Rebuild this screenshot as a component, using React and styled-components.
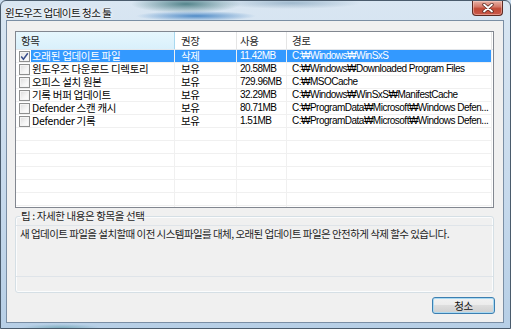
import React from "react";
import styled, { createGlobalStyle } from "styled-components";

const Global = createGlobalStyle`
  html, body { margin: 0; padding: 0; background: #c9dcee; }
  body { font-family: "Noto Sans CJK KR", "Liberation Sans", sans-serif; }
  * { box-sizing: border-box; }
`;

const KFONT = `"Noto Sans CJK KR", "Liberation Sans", sans-serif`;
const LFONT = `"Liberation Sans", "DejaVu Sans", "Noto Sans CJK KR", sans-serif`;

const Window = styled.div`
  width: 511px;
  height: 329px;
  display: flex;
  flex-direction: column;
  border: 1px solid #4a5b6c;
  border-radius: 6px 6px 0 0;
  overflow: hidden;
  background:
    radial-gradient(ellipse 55px 9px at 185px 3px, rgba(40, 100, 105, 0.75), transparent),
    radial-gradient(ellipse 60px 5px at 195px 15px, rgba(35, 110, 185, 0.75), transparent),
    radial-gradient(ellipse 70px 6px at 290px 2px, rgba(90, 130, 160, 0.45), transparent),
    radial-gradient(ellipse 40px 4px at 60px 327px, rgba(70, 140, 150, 0.5), transparent),
    linear-gradient(180deg, #d9e6f2 0%, #c6d9ec 60%, #b7cfe6 100%);
`;

const TitleBar = styled.div`
  height: 19px;
  display: flex;
  align-items: flex-start;
  padding-left: 4px;
`;

const Title = styled.div`
  font-family: ${KFONT};
  font-size: 10.5px;
  letter-spacing: -0.5px;
  line-height: 12px;
  margin-top: 6px;
  color: #111;
  text-shadow: 0 0 5px #fff, 0 0 3px #fff;
  flex: 1;
`;

const CloseButton = styled.div`
  width: 31px;
  height: 15px;
  margin-right: 7px;
  border: 1px solid #5b2a22;
  border-top: none;
  border-radius: 0 0 4px 4px;
  background: linear-gradient(180deg, #e8b2a6 0%, #d47a6a 40%, #c14a36 55%, #c9584a 100%);
  box-shadow: inset 0 0 0 1px rgba(255, 220, 210, 0.45);
  display: flex;
  align-items: center;
  justify-content: center;
`;

const Client = styled.div`
  flex: 1;
  margin: 0 6px 5px 5px;
  border: 1px solid #7a8ea4;
  background: #f0f0f0;
  display: flex;
  flex-direction: column;
  padding: 10px 9px 0 8px;
`;

const ListView = styled.div`
  height: 177px;
  border: 1px solid #828790;
  background: #fff;
  overflow: hidden;
  display: flex;
  flex-direction: column;
`;

const COLS = "159px 62px 50px 205px";

const HeaderRow = styled.div`
  display: grid;
  grid-template-columns: ${COLS};
  height: 18px;
  flex: none;
  border-bottom: 1px solid #e3e6ea;
`;

const HeaderCell = styled.div`
  font-family: ${KFONT};
  font-size: 10.5px;
  letter-spacing: -0.3px;
  line-height: 17px;
  padding-left: ${(p) => p.$pad || 5}px;
  color: #1e1e1e;
  border-right: 1px solid ${(p) => (p.$hot ? "#a8d8ef" : "#e5e5e5")};
  background: ${(p) =>
    p.$hot ? "linear-gradient(180deg, #e6f6fd 0%, #d9f0fb 100%)" : "#fff"};
`;

const Row = styled.div`
  display: grid;
  grid-template-columns: ${COLS};
  height: 13px;
  flex: none;
`;

const Cell = styled.div`
  font-family: ${(p) => (p.$latin ? LFONT : KFONT)};
  font-size: ${(p) => (p.$latin ? "10px" : "10.5px")};
  letter-spacing: ${(p) => (p.$latin ? "-0.5px" : "-0.3px")};
  line-height: 12px;
  height: 13px;
  padding-left: ${(p) => p.$pad || 5}px;
  white-space: nowrap;
  border-right: 1px solid #f0f0f0;
  border-bottom: 1px solid #f0f0f0;
  color: ${(p) => (p.$sel ? "#fff" : "#000")};
  background: ${(p) => (p.$sel ? "#3399ff" : "transparent")};
`;

const FirstCell = styled.div`
  display: flex;
  height: 13px;
  border-right: 1px solid #f0f0f0;
  border-bottom: 1px solid #f0f0f0;
`;

const CheckWrap = styled.div`
  width: 15px;
  flex: none;
  display: flex;
  align-items: center;
  padding-left: 3px;
`;

const Check = styled.div`
  width: 11px;
  height: 11px;
  border: 1px solid #8e8f8f;
  background: linear-gradient(135deg, #dcdcdc 0%, #f6f6f6 60%, #fff 100%);
  box-shadow: inset 0 0 0 1px #f4f4f4;
  display: flex;
  align-items: center;
  justify-content: center;
`;

const Label = styled.div`
  flex: 1;
  font-family: ${KFONT};
  font-size: 10.5px;
  letter-spacing: -0.3px;
  line-height: 12px;
  padding-left: 1px;
  white-space: nowrap;
  color: ${(p) => (p.$sel ? "#fff" : "#000")};
  background: ${(p) => (p.$sel ? "#3399ff" : "transparent")};
`;

const Group = styled.fieldset`
  margin: 2px 0 0 0;
  padding: 3px 0 15px 0;
  border: 1px solid #d5dfe5;
  border-radius: 3px;
  box-shadow: inset 0 0 0 1px #fbfcfd;
`;

const Legend = styled.legend`
  font-family: ${KFONT};
  font-size: 10.5px;
  letter-spacing: -0.4px;
  line-height: 12px;
  padding: 0 1px;
  margin-left: 4px;
  color: #1e1e1e;
`;

const InfoBox = styled.div`
  height: 52px;
  border: 1px solid #dfe4e9;
  border-left: none;
  border-right: none;
  font-family: ${KFONT};
  font-size: 10.5px;
  letter-spacing: -0.55px;
  line-height: 12px;
  padding: 2px 0 0 4px;
  color: #1e1e1e;
`;

const ButtonRow = styled.div`
  display: flex;
  justify-content: flex-end;
  margin-top: 4px;
  margin-right: -1px;
`;

const Button = styled.button`
  width: 63px;
  height: 17px;
  padding: 0;
  border: 1px solid #3c7fb1;
  border-radius: 3px;
  background: linear-gradient(180deg, #f2f2f2 0%, #ebebeb 49%, #dddddd 50%, #cfcfcf 100%);
  box-shadow: inset 0 0 0 1px #a9d9f2;
  font-family: ${KFONT};
  font-size: 10.5px;
  letter-spacing: -0.3px;
  line-height: 14px;
  color: #111;
`;

const rows = [
  { name: "오래된 업데이트 파일", rec: "삭제", size: "11.42MB", path: "C:₩Windows₩WinSxS", checked: true, sel: true },
  { name: "윈도우즈 다운로드 디렉토리", rec: "보유", size: "20.58MB", path: "C:₩Windows₩Downloaded Program Files" },
  { name: "오피스 설치 원본", rec: "보유", size: "729.96MB", path: "C:₩MSOCache" },
  { name: "기록 버퍼 업데이트", rec: "보유", size: "32.29MB", path: "C:₩Windows₩WinSxS₩ManifestCache" },
  { name: "Defender 스캔 캐시", rec: "보유", size: "80.71MB", path: "C:₩ProgramData₩Microsoft₩Windows Defen..." },
  { name: "Defender 기록", rec: "보유", size: "1.51MB", path: "C:₩ProgramData₩Microsoft₩Windows Defen..." },
];

const CheckMark = () => (
  <svg width="9" height="9" viewBox="0 0 9 9">
    <path d="M1.2 4.6 L3.4 7.2 L7.8 1.2" fill="none" stroke="#3a4f8c" strokeWidth="1.5" />
  </svg>
);

const CloseX = () => (
  <svg width="12" height="10" viewBox="0 0 12 10">
    <path d="M2 1.5 L10 8.5 M10 1.5 L2 8.5" stroke="#5b2a22" strokeWidth="3.4" strokeLinecap="round" />
    <path d="M2 1.5 L10 8.5 M10 1.5 L2 8.5" stroke="#fff" strokeWidth="1.8" strokeLinecap="round" />
  </svg>
);

export default function App() {
  const filler = Array.from({ length: 7 });
  return (
    <>
      <Global />
      <Window>
        <TitleBar>
          <Title>윈도우즈 업데이트 청소 툴</Title>
          <CloseButton>
            <CloseX />
          </CloseButton>
        </TitleBar>
        <Client>
          <ListView>
            <HeaderRow>
              <HeaderCell $hot>항목</HeaderCell>
              <HeaderCell $pad={6}>권장</HeaderCell>
              <HeaderCell $pad={3}>사용</HeaderCell>
              <HeaderCell>경로</HeaderCell>
            </HeaderRow>
            {rows.map((r, i) => (
              <Row key={i}>
                <FirstCell>
                  <CheckWrap>
                    <Check>{r.checked && <CheckMark />}</Check>
                  </CheckWrap>
                  <Label $sel={r.sel}>{r.name}</Label>
                </FirstCell>
                <Cell $sel={r.sel} $pad={6}>{r.rec}</Cell>
                <Cell $sel={r.sel} $pad={3} $latin>{r.size}</Cell>
                <Cell $sel={r.sel} $latin>{r.path}</Cell>
              </Row>
            ))}
            {filler.map((_, i) => (
              <Row key={"f" + i}>
                <FirstCell />
                <Cell />
                <Cell />
                <Cell />
              </Row>
            ))}
          </ListView>
          <Group>
            <Legend>팁 : 자세한 내용은 항목을 선택</Legend>
            <InfoBox>
              새 업데이트 파일을 설치할때 이전 시스템파일를 대체, 오래된 업데이트 파일은 안전하게 삭제 할수 있습니다.
            </InfoBox>
          </Group>
          <ButtonRow>
            <Button>청소</Button>
          </ButtonRow>
        </Client>
      </Window>
    </>
  );
}
